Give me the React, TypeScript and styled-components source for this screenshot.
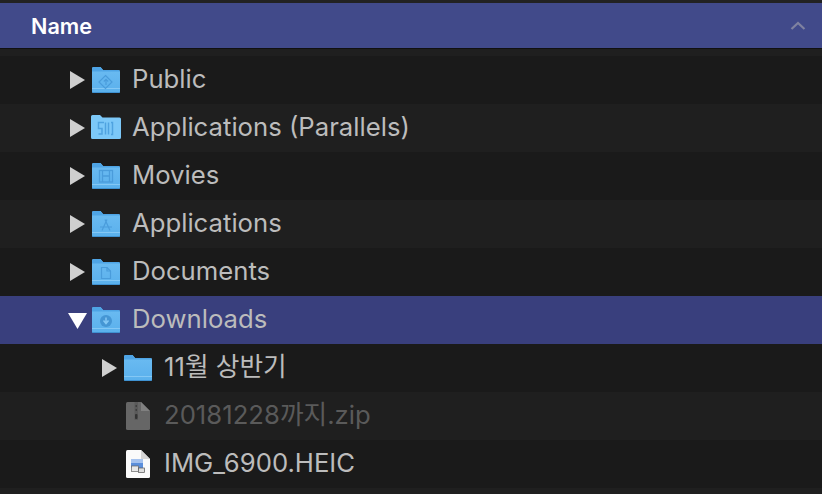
import React from "react";
import styled, { createGlobalStyle } from "styled-components";

const Global = createGlobalStyle`
  html, body {
    margin: 0;
    padding: 0;
    background: #1f1f1f;
  }
`;

const Window = styled.div`
  width: 822px;
  height: 494px;
  overflow: hidden;
  background: #1f1f1f;
  font-family: "Inter", "Noto Sans CJK KR", sans-serif;
  box-sizing: border-box;
`;

const TopStrip = styled.div`
  height: 3px;
  background: #222;
`;

const Header = styled.div`
  height: 46px;
  background: #414a8a;
  border-bottom: 1px solid #111;
  display: flex;
  align-items: center;
  justify-content: space-between;
  padding: 0 16px 0 31px;
  box-sizing: border-box;
  color: #fff;
  font-size: 21.6px;
  font-weight: 600;
`;

const List = styled.div`
  padding-top: 7px;
`;

const Row = styled.div<{ $depth: number; $alt: boolean; $selected?: boolean }>`
  height: 48px;
  display: flex;
  align-items: center;
  padding-left: ${(p) => (p.$depth === 0 ? 70 : 102)}px;
  background: ${(p) => (p.$selected ? "#393f7d" : p.$alt ? "#1a1a1a" : "#1f1f1f")};
`;

const Disclosure = styled.div<{ $open?: boolean }>`
  width: ${(p) => (p.$open ? 19 : 15)}px;
  height: 18px;
  margin: ${(p) => (p.$open ? "0 -2px" : "0")};
  flex: none;
  background: ${(p) => (p.$open ? "#fff" : "#cfcfcf")};
  clip-path: ${(p) =>
    p.$open
      ? "polygon(0 2px, 100% 2px, 50% 18px)"
      : "polygon(0 0, 100% 50%, 0 100%)"};
`;

const NoDisclosure = styled.div`
  width: 15px;
  height: 18px;
  flex: none;
`;

const IconSlot = styled.div`
  width: 30px;
  height: 30px;
  flex: none;
  margin-left: 6px;
  display: flex;
  align-items: center;
  justify-content: center;
`;

const Label = styled.span<{ $dim?: boolean }>`
  font-size: 25.7px;
  line-height: 30px;
  margin-left: 11px;
  padding-bottom: 2px;
  color: ${(p) => (p.$dim ? "#5a5a5a" : "#bcbcbc")};
  white-space: nowrap;
`;

type Glyph = "public" | "parallels" | "movies" | "apps" | "docs" | "downloads" | "plain";

const marks: Record<Glyph, React.ReactNode> = {
  public: (
    <g fill="none" stroke="#4a9cdb" strokeWidth="1.2">
      <path d="M14.500 10.500l6.500 6.500-6.500 6.500-6.500-6.500z" />
      <path d="M15 20v-5M12.800 16.500l2.200-2.200 2.200 2.200" />
    </g>
  ),
  parallels: (
    <g fill="none" stroke="#4fa3e0" strokeWidth="1.500">
      <path d="M13 9.500H7.500v6h3.500v5.500H7.500M14.500 9.500V21.500M17.500 9.500V21.500M20 9.500h1.500V21.500H20" />
    </g>
  ),
  movies: (
    <g fill="none" stroke="#4a9cdb" strokeWidth="1.300">
      <rect x="8.500" y="9.500" width="13" height="11.500" />
      <path d="M11.500 9.500v11.500M18.500 9.500v11.500M11.500 15h7" />
    </g>
  ),
  apps: (
    <g fill="none" stroke="#4a9cdb" strokeWidth="1.200">
      <path d="M16 10.500l-5 11M14 10.500l5 11M9 18h12" />
    </g>
  ),
  docs: (
    <g fill="none" stroke="#4a9cdb" strokeWidth="1.200">
      <path d="M10.500 10.500h5.500l3.500 3.500v7.500h-9z" />
      <path d="M16 10.500v3.500h3.500" />
    </g>
  ),
  downloads: (
    <g>
      <circle cx="15" cy="16" r="6" fill="#4596d4" />
      <path d="M15 12.500v5M12.500 15.500l2.500 3 2.500-3" fill="none" stroke="#84c8f5" strokeWidth="1.500" />
    </g>
  ),
  plain: null,
};

const Folder = ({ glyph }: { glyph: Glyph }) => {
  if (glyph === "parallels") {
    return (
      <svg width="30" height="30" viewBox="0 0 30 30">
        <path
          d="M0 3.500Q0 2 1.500 2h7.500l2.500 2.500H28.500Q30 4.500 30 6v18.500q0 1.500-1.500 1.500h-27Q0 26 0 24.500z"
          fill="#7cc8f8"
        />
        {marks.parallels}
      </svg>
    );
  }
  return (
    <svg width="30" height="30" viewBox="0 0 30 30">
      <defs>
        <linearGradient id="folderBody" x1="0" y1="0" x2="0" y2="1">
          <stop offset="0" stopColor="#6cbcf2" />
          <stop offset="1" stopColor="#5ab0ec" />
        </linearGradient>
      </defs>
      <path
        d="M1 3.500Q1 2 2.500 2h7l2.500 3H27.500Q29 5 29 6.500v20q0 1.500-1.500 1.500h-25Q1 28 1 26.500z"
        fill="url(#folderBody)"
      />
      <path d="M1 6.500h28Q29 5 27.500 5H12L10.500 6.500z" fill="#4ea4e5" />
      <path d="M1 3.500Q1 2 2.500 2h7l2.500 3-1.500 1.500H1z" fill="#4ea4e5" />
      <path d="M1 23.500h28" stroke="#84c8f5" strokeWidth="1" />
      <path d="M1 26.500q0 1.500 1.500 1.500h25q1.500 0 1.500-1.500V27H1z" fill="#3f92d2" />
      {marks[glyph]}
    </svg>
  );
};

const ZipIcon = () => (
  <svg width="30" height="30" viewBox="0 0 30 30">
    <path d="M3 2.500Q3 1 4.500 1H18L27 10v17.500Q27 29 25.500 29h-21Q3 29 3 27.500z" fill="#666" />
    <path d="M18 1v9h9z" fill="#808080" />
    <path d="M11.500 1h3.500v18h-3.500z" fill="#5a5a5a" />
    <rect x="12.500" y="4" width="1.500" height="2" fill="#3e3e3e" />
    <rect x="12.500" y="8" width="1.500" height="2" fill="#3e3e3e" />
    <rect x="12" y="13" width="2.500" height="5" rx="1" fill="#333" />
  </svg>
);

const ImageIcon = () => (
  <svg width="30" height="30" viewBox="0 0 30 30">
    <path d="M3 2.500Q3 1 4.500 1H18L27 10v17.500Q27 29 25.500 29h-21Q3 29 3 27.500z" fill="#fafafa" />
    <path d="M18 1v9h9z" fill="#d6d6d6" />
    <rect x="8" y="10" width="12" height="9" fill="#5b8fdc" />
    <rect x="8" y="10" width="12" height="4" fill="#a5c2ee" />
    <rect x="8.500" y="17" width="7" height="5.500" fill="#e8e8e8" stroke="#666" strokeWidth="0.7" />
    <rect x="15.500" y="19" width="6" height="4.500" fill="#ddd" stroke="#555" strokeWidth="0.7" />
  </svg>
);

const Chevron = () => (
  <svg width="16" height="10" viewBox="0 0 16 10">
    <path d="M1.500 8L8 2l6.500 6" fill="none" stroke="#7f82a0" strokeWidth="2.200" />
  </svg>
);

const folders: { name: string; glyph: Glyph }[] = [
  { name: "Public", glyph: "public" },
  { name: "Applications (Parallels)", glyph: "parallels" },
  { name: "Movies", glyph: "movies" },
  { name: "Applications", glyph: "apps" },
  { name: "Documents", glyph: "docs" },
];

export default function App() {
  return (
    <Window>
      <Global />
      <TopStrip />
      <Header>
        <span>Name</span>
        <Chevron />
      </Header>
      <List>
        {folders.map((f, i) => (
          <Row key={f.name} $depth={0} $alt={i % 2 === 0}>
            <Disclosure />
            <IconSlot>
              <Folder glyph={f.glyph} />
            </IconSlot>
            <Label>{f.name}</Label>
          </Row>
        ))}
        <Row $depth={0} $alt={false} $selected>
          <Disclosure $open />
          <IconSlot>
            <Folder glyph="downloads" />
          </IconSlot>
          <Label>Downloads</Label>
        </Row>
        <Row $depth={1} $alt>
          <Disclosure />
          <IconSlot>
            <Folder glyph="plain" />
          </IconSlot>
          <Label>11월 상반기</Label>
        </Row>
        <Row $depth={1} $alt={false}>
          <NoDisclosure />
          <IconSlot>
            <ZipIcon />
          </IconSlot>
          <Label $dim>20181228까지.zip</Label>
        </Row>
        <Row $depth={1} $alt>
          <NoDisclosure />
          <IconSlot>
            <ImageIcon />
          </IconSlot>
          <Label>IMG_6900.HEIC</Label>
        </Row>
      </List>
    </Window>
  );
}
